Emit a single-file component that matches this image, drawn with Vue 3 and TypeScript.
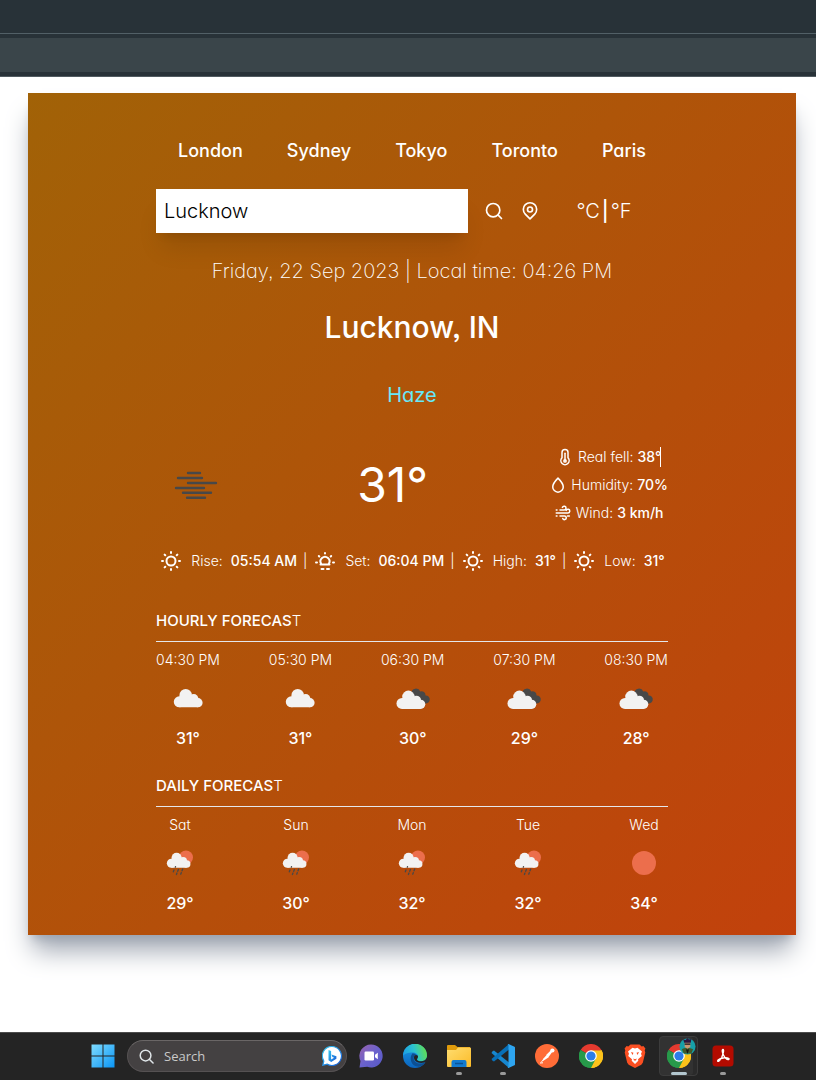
<script setup lang="ts">
import { ref } from 'vue'

type Sky = 'cloud' | 'clouds' | 'rain' | 'clear'
interface Slot { label: string; sky: Sky; temp: string }

const cities = ['London', 'Sydney', 'Tokyo', 'Toronto', 'Paris']
const query = ref('Lucknow')
const taskQuery = ref('')

const sunFacts = [
  { icon: 'sun', label: 'Rise:', value: '05:54 AM' },
  { icon: 'sunset', label: 'Set:', value: '06:04 PM' },
  { icon: 'sun', label: 'High:', value: '31°' },
  { icon: 'sun', label: 'Low:', value: '31°' },
]

const forecasts: { head: string; tail: string; kind: string; slots: Slot[] }[] = [
  {
    head: 'HOURLY FORECAS', tail: 'T', kind: 'hourly',
    slots: [
      { label: '04:30 PM', sky: 'cloud', temp: '31°' },
      { label: '05:30 PM', sky: 'cloud', temp: '31°' },
      { label: '06:30 PM', sky: 'clouds', temp: '30°' },
      { label: '07:30 PM', sky: 'clouds', temp: '29°' },
      { label: '08:30 PM', sky: 'clouds', temp: '28°' },
    ],
  },
  {
    head: 'DAILY FORECAS', tail: 'T', kind: 'daily',
    slots: [
      { label: 'Sat', sky: 'rain', temp: '29°' },
      { label: 'Sun', sky: 'rain', temp: '30°' },
      { label: 'Mon', sky: 'rain', temp: '32°' },
      { label: 'Tue', sky: 'rain', temp: '32°' },
      { label: 'Wed', sky: 'clear', temp: '34°' },
    ],
  },
]
</script>

<template>
  <div class="screen">
    <header class="browser">
      <div class="tabs"></div>
      <div class="toolbar"></div>
    </header>

    <svg class="defs" aria-hidden="true">
      <defs>
        <g id="cloud-shape">
          <circle cx="15.300" cy="27.800" r="5.500" />
          <circle cx="21.700" cy="21.200" r="6.200" />
          <circle cx="29.700" cy="24.800" r="4.700" />
          <circle cx="34" cy="28.700" r="4.600" />
          <path d="M15.300 22.500h14l4.700 4v6.800H15.300z" />
        </g>
        <linearGradient id="win" x1="0" y1="0" x2="1" y2="1"><stop offset="0" stop-color="#7fdcff" /><stop offset="1" stop-color="#0a95f5" /></linearGradient>
        <linearGradient id="chat" x1="0" y1="0" x2="1" y2="1"><stop offset="0" stop-color="#9a62ad" /><stop offset=".5" stop-color="#6a62cc" /><stop offset="1" stop-color="#5558c6" /></linearGradient>
        <linearGradient id="edge-a" x1="0" y1=".6" x2="1" y2=".4"><stop offset="0" stop-color="#1b9de6" /><stop offset=".5" stop-color="#2cc3cf" /><stop offset="1" stop-color="#63e04b" /></linearGradient>
        <linearGradient id="edge-b" x1="0" y1="0" x2="0" y2="1"><stop offset="0" stop-color="#1a9be6" /><stop offset="1" stop-color="#0b64bd" /></linearGradient>
        <linearGradient id="bing" x1="0" y1="0" x2="1" y2="1"><stop offset="0" stop-color="#35c9f0" /><stop offset="1" stop-color="#1558d6" /></linearGradient>
        <linearGradient id="folder" x1="0" y1="0" x2="1" y2="1"><stop offset="0" stop-color="#ffdd70" /><stop offset="1" stop-color="#fbbb28" /></linearGradient>
        <g id="chrome-logo">
          <path d="M12 12 1.600 6A12 12 0 0 1 22.400 6z" fill="#e53a2f" />
          <path d="M12 12 22.400 6A12 12 0 0 1 12 24z" fill="#fcc31b" />
          <path d="M12 12v12A12 12 0 0 1 1.600 6z" fill="#279a4a" />
          <path d="M12 6.500h10.700A12 12 0 0 1 12 24l4.800-9.200z" fill="#fcc31b" />
          <path d="M7.200 14.700 1.600 6A12 12 0 0 0 12 24l4.800-9.200z" fill="#279a4a" />
          <circle cx="12" cy="12" r="5.800" fill="#fff" />
          <circle cx="12" cy="12" r="4.600" fill="#2d7de9" />
        </g>
      </defs>
    </svg>

    <main class="card">
      <nav class="cities" aria-label="Cities">
        <button v-for="city in cities" :key="city" type="button">{{ city }}</button>
      </nav>

      <form class="lookup" @submit.prevent>
        <div class="find">
          <input v-model="query" type="text" aria-label="City" />
          <button type="submit" aria-label="Search city">
            <svg viewBox="0 0 24 24" class="line i20"><circle cx="11" cy="11" r="8" /><path d="m17 17 4 4" /></svg>
          </button>
          <button type="button" aria-label="Use my location">
            <svg viewBox="0 0 24 24" class="line i20"><path d="M12 21.500 6.300 15.700a8 8 0 1 1 11.400 0z" /><circle cx="12" cy="10.200" r="3" /></svg>
          </button>
        </div>
        <div class="units">
          <button type="button">°C</button><span class="bar">|</span><button type="button">°F</button>
        </div>
      </form>

      <p class="when">Friday, 22 Sep 2023 | Local time: 04:26 PM</p>
      <h1>Lucknow, IN</h1>
      <p class="state">Haze</p>

      <section class="now">
        <svg class="haze" viewBox="0 0 80 80" aria-hidden="true">
          <path d="M32 28h12M22 33h24M32 38h28M20 43h28M27 47.700h28M31 52.700h18" />
        </svg>
        <p class="degrees">31°</p>
        <ul class="details">
          <li>
            <svg viewBox="0 0 24 24" class="line i18"><path d="M8 13V6a4 4 0 0 1 8 0v7a5.500 5.500 0 1 1-8 0z" /><path d="M12 7v10" /><circle cx="12" cy="17.200" r="1.500" /></svg>
            <span class="caret">Real fell: <b>38°</b></span>
          </li>
          <li>
            <svg viewBox="0 0 24 24" class="line i18"><path d="M12 2.800C8.500 6.300 5 10.300 5 14.500a7 7 0 0 0 14 0c0-4.200-3.500-8.200-7-11.700z" /></svg>
            <span>Humidity: <b>70%</b></span>
          </li>
          <li>
            <svg viewBox="0 0 24 24" class="line i18"><path d="M3 8h1M8 8h5.500A2.500 2.500 0 1 0 11.200 4.500M3 12h15.500A2.500 2.500 0 1 0 16.200 8.500M3 16h1M8 16h6a2.400 2.400 0 1 1-2.300 3.200M18 16h2.500" /></svg>
            <span>Wind: <b>3 km/h</b></span>
          </li>
        </ul>
      </section>

      <section class="facts">
        <template v-for="(fact, i) in sunFacts" :key="fact.label">
          <span v-if="i" class="split">|</span>
          <div class="fact">
            <svg v-if="fact.icon === 'sun'" viewBox="0 0 24 24" class="line i24">
              <circle cx="12" cy="12" r="4.500" />
              <path d="M12 3v1M12 20v1M3 12h1M20 12h1M5.600 5.600l.7.7M17.700 17.700l.7.7M5.600 18.400l.7-.7M17.700 6.300l.7-.7" />
            </svg>
            <svg v-else viewBox="0 0 24 24" class="line i24">
              <path d="M7.500 15.500h9M8.300 15a4.500 4.500 0 1 1 7.400 0M12 4v.4M3 13.500h1M20 13.500h1M5.800 7l.5.500M17.700 7.500l.5-.5M8.500 20h2M14 20h2" />
            </svg>
            <span>{{ fact.label }}</span>
            <b>{{ fact.value }}</b>
          </div>
        </template>
      </section>

      <section v-for="group in forecasts" :key="group.kind" class="forecast">
        <h2>{{ group.head }}<span>{{ group.tail }}</span></h2>
        <hr />
        <ul :class="['slots', group.kind]">
          <li v-for="slot in group.slots" :key="slot.label">
            <span class="label">{{ slot.label }}</span>
            <svg viewBox="0 0 48 48" aria-hidden="true">
              <use v-if="slot.sky === 'cloud'" href="#cloud-shape" fill="#f2f2f2" />
              <template v-else-if="slot.sky === 'clouds'">
                <path d="M22.300 19a4.700 4.700 0 0 1 9-1.600 4 4 0 0 1 5.200 4.200 3.900 3.900 0 1 1-1.500 7.300L26 25z" fill="#484848" />
                <use href="#cloud-shape" fill="#f2f2f2" transform="translate(-2.300 1.600)" />
              </template>
              <template v-else-if="slot.sky === 'rain'">
                <circle cx="30" cy="18.500" r="7" fill="#ec6e4c" />
                <use href="#cloud-shape" fill="#f2f2f2" transform="translate(2.800 1.400) scale(.82)" />
                <path d="m18 31-.7 1.800M22.400 30.500l-.7 1.800M26.700 30l-.7 1.800M21 34l-.6 1.500M25.300 33.700l-.6 1.500M19.500 27.700l-.2.500" stroke="#484848" stroke-width="1.300" stroke-linecap="round" />
              </template>
              <circle v-else cx="24" cy="24" r="12" fill="#ec6e4c" />
            </svg>
            <b>{{ slot.temp }}</b>
          </li>
        </ul>
      </section>
    </main>

    <footer class="taskbar">
      <button type="button" class="task" aria-label="Start">
        <svg viewBox="0 0 24 24"><path d="M.5.500h11v11H.5zM12.500.500h11v11h-11zM.5 12.500h11v11H.5zM12.500 12.500h11v11h-11z" fill="url(#win)" /></svg>
      </button>
      <label class="tasksearch">
        <svg viewBox="0 0 16 16" class="glass"><circle cx="7" cy="7" r="5.700" /><path d="m11 11 4 4" /></svg>
        <input v-model="taskQuery" type="text" placeholder="Search" aria-label="Search this computer" />
        <svg viewBox="0 0 20 20" class="bing">
          <path d="M10 .5a9.500 9.500 0 1 1-5 17.600L.8 19.300 1.800 15A9.500 9.500 0 0 1 10 .5z" fill="#fff" stroke="url(#bing)" stroke-width="1.200" />
          <path d="m6.500 4 2.600 1v8.500l3-1.700-1.700-.8-1-2.500 5 1.700v2.600l-5.200 3.100-2.700-1.600z" fill="url(#bing)" />
        </svg>
      </label>
      <button type="button" class="task" aria-label="Chat">
        <svg viewBox="0 0 24 24"><path d="M12 .5a11.500 11.500 0 1 1-3.800 22.300L.5 23.500l1-6.500A11.500 11.500 0 0 1 12 .5z" fill="url(#chat)" /><rect x="5.500" y="7.500" width="9.500" height="9" rx="1.200" fill="#fff" /><path d="m16 10.800 2.800-2.100v6.600L16 13.200z" fill="#fff" /></svg>
      </button>
      <button type="button" class="task" aria-label="Edge">
        <svg viewBox="0 0 24 24">
          <circle cx="12" cy="12" r="12" fill="url(#edge-b)" />
          <path d="M0 12A12 12 0 0 1 24 11.500c0 3.600-2.600 5.700-5.700 5.700-2.600 0-4.300-.9-4.300-1.800 0-.7 1-1 1-3 0-2.200-2.200-4-5.300-4C5.500 8.400.5 10 0 12z" fill="url(#edge-a)" />
          <path d="M9.500 9.200C5.500 14 8.500 22 14.500 22.600c3 .3 6-1.300 7.800-4.400C15 22 9 17 11 12.500c.6-1.200 1.400-1.500 2.500-1.200-.8-1.300-2.500-2.100-4-2.100z" fill="#0d4f92" />
          <path d="M24 17.200c-6 3.800-13.500.8-13-4.200.2-1.200 1-2 2-2 1.300 0 2 .8 2 1.800s-1 1.600-1 2.600c0 1 1.700 1.800 4.300 1.800 2 0 4.500-.8 5.700-4z" fill="#242424" />
        </svg>
      </button>
      <button type="button" class="task running" aria-label="Files">
        <svg viewBox="0 0 24 24"><path d="M0 2a1 1 0 0 1 1-1h7l2.500 2H23v5H0z" fill="#e09b0b" /><path d="M0 6h9l2-2.500h12a1 1 0 0 1 1 1V22a1 1 0 0 1-1 1H1a1 1 0 0 1-1-1z" fill="url(#folder)" /><path d="M4.500 23v-5a2 2 0 0 1 2-2h11a2 2 0 0 1 2 2v5z" fill="#127bd0" /><path d="M8 19.500h8" stroke="#0a5396" stroke-width="1.500" /></svg>
      </button>
      <button type="button" class="task running" aria-label="Code">
        <svg viewBox="0 0 24 24"><path d="M1.500 7.200 3 6.500l15 12V24L.5 9z" fill="#1787cf" /><path d="M1.500 16.800 3 17.500l15-12V0L.5 15z" fill="#0870b8" /><path d="m17.500 0 6 2.800a1 1 0 0 1 .5 1v16.400a1 1 0 0 1-.5 1l-6 2.800-1.200-.6c.7.300 1.200-.2 1.200-.8V1.400c0-.6-.5-1.100-1.200-.8z" fill="#2ea5f0" /></svg>
      </button>
      <button type="button" class="task" aria-label="Postman">
        <svg viewBox="0 0 24 24"><circle cx="12" cy="12" r="12" fill="#ff6c37" /><path d="M5.300 18.800 11.500 11l2.300 2.200zM11.300 10.800l4.400-4.200 1.500 1.500-3.600 4.900z" fill="#fff" /><circle cx="17.400" cy="6.500" r="2.100" fill="#fff" /><path d="m5 19 3-.2M8 15.500l3-2.600" stroke="#fff" /></svg>
      </button>
      <button type="button" class="task" aria-label="Chrome">
        <svg viewBox="0 0 24 24"><use href="#chrome-logo" /></svg>
      </button>
      <button type="button" class="task" aria-label="Brave">
        <svg viewBox="0 0 24 24"><path d="M7.500.5h9l2.200 2 1.700-.4 2 2.500-.7 2 .6 2-2.500 10.200-1.500 2L12 24l-6.300-3.200-1.500-2L1.700 8.600l.6-2-.7-2 2-2.500 1.700.4z" fill="#fb4f22" /><path d="m12 4.500 2.500-.7L19 7.500l-1 2.200.8 2.300-3.800 3.300.3 1.500L12 20l-3.300-3.200.3-1.500L5.200 12 6 9.700 5 7.500l4.500-3.700z" fill="#fff" /><path d="m8 8 2.500.8-1 2.300zM16 8l-2.500.8 1 2.300zM10.300 14.500l1.700.8 1.700-.8-.7 2h-2z" fill="#fb4f22" /></svg>
      </button>
      <button type="button" class="task active" aria-label="Chrome profile window">
        <svg viewBox="0 0 24 24"><use href="#chrome-logo" /></svg>
        <svg class="avatar" viewBox="0 0 18 18"><circle cx="9" cy="9" r="8.500" fill="#16a0a8" /><path d="M3 12c2-2 9-2 12 0l-2 4.500H5z" fill="#3f5a2c" /><path d="M6 4h6v5.500l-3 2-3-2z" fill="#c99772" /><path d="M4.500 1.500 7 2l2-2 1.500 1.500L13 1l-.5 4h-7z" fill="#2a1740" /><path d="M6 6.500h6M8 12l1 3 1-3" stroke="#15151c" stroke-width="1.300" fill="none" /></svg>
      </button>
      <button type="button" class="task running" aria-label="Acrobat">
        <svg viewBox="0 0 24 24"><rect x="1.500" y="1.500" width="21" height="21" rx="3.500" fill="#b30b00" /><path d="M12 5.500c-1.400 0-.6 3.500.6 5.800 1.400 2.600 3.700 4.600 5 4.200 1.400-.6-.4-2-4-1.700-3.400.3-7 1.700-7 3 0 1.500 2.400 0 4.200-3.500C12.200 10 13.200 5.500 12 5.500z" fill="none" stroke="#fff" stroke-width="1.400" /></svg>
      </button>
    </footer>
  </div>
</template>

<style>
body {
  background: #fff;
}
</style>

<style scoped>
* {
  box-sizing: border-box;
}

.screen {
  display: flex;
  flex-direction: column;
  min-height: 100vh;
  overflow: hidden;
  font-family: Inter, "Liberation Sans", sans-serif;
  font-feature-settings: "cv11", "ss03";
  font-weight: 300;
  color: #fff;
}

.defs {
  position: absolute;
  width: 0;
  height: 0;
}

.browser {
  border-bottom: 1px solid #515b61;
  background: #283238;
}

.tabs {
  height: 34px;
  border-bottom: 1px solid #526067;
}

.toolbar {
  height: 34px;
  margin: 4px 0;
  background: #3a454a;
}

button,
input {
  margin: 0;
  padding: 0;
  border: 0;
  background: none;
  color: inherit;
  font: inherit;
  font-feature-settings: inherit;
}

button {
  cursor: pointer;
}

p,
h1,
h2,
ul {
  margin: 0;
  padding: 0;
  list-style: none;
}

b {
  font-weight: 500;
}

svg {
  display: block;
  flex: none;
}

.line {
  fill: none;
  stroke: #fff;
  stroke-width: 2;
  stroke-linecap: round;
  stroke-linejoin: round;
}

.i18 {
  width: 18px;
  height: 18px;
}

.i20 {
  width: 20px;
  height: 20px;
}

.i24 {
  width: 24px;
  height: 24px;
}

.card {
  margin: 16px 20px 48px 28px;
  padding: 20px 128px;
  background: linear-gradient(to bottom right, #a16207, #c2410c);
  box-shadow: 0 20px 25px -5px #9ca3af, 0 8px 10px -6px #9ca3af;
}

.cities {
  display: flex;
  justify-content: space-around;
  margin: 24px 0;
  font-size: 18px;
  font-weight: 500;
  line-height: 28px;
}

.lookup {
  display: flex;
  margin: 24px 0;
  font-size: 20px;
  line-height: 28px;
}

.find {
  display: flex;
  flex: 3;
  align-items: center;
  gap: 16px;
  min-width: 0;
}

.find input {
  flex: 1;
  min-width: 0;
  height: 44px;
  padding: 8px;
  outline: none;
  background: #fff;
  color: #000;
  box-shadow: 0 20px 25px -5px rgba(0, 0, 0, 0.1), 0 8px 10px -6px rgba(0, 0, 0, 0.1);
}

.units {
  display: flex;
  flex: 1;
  align-items: center;
  justify-content: center;
}

.bar {
  margin: 0 2px;
  font-weight: 500;
}

.when {
  margin: 24px 0;
  font-size: 20px;
  font-weight: 200;
  line-height: 28px;
  text-align: center;
}

h1 {
  margin: 24px 0 12px;
  font-size: 30px;
  font-weight: 500;
  line-height: 36px;
  text-align: center;
}

.state {
  padding: 24px 0;
  color: #67e8f9;
  font-size: 20px;
  font-weight: 400;
  line-height: 28px;
  text-align: center;
}

.now {
  display: flex;
  align-items: center;
  justify-content: space-between;
  padding: 12px 0;
}

.haze {
  width: 80px;
  height: 80px;
  fill: none;
  stroke: #484848;
  stroke-width: 2.400;
  stroke-linecap: round;
}

.degrees {
  font-size: 48px;
  font-weight: 400;
  line-height: 48px;
}

.details {
  display: flex;
  flex-direction: column;
  align-items: center;
  gap: 8px;
  font-size: 14px;
  line-height: 20px;
}

.details li {
  display: flex;
  align-items: center;
  gap: 4px;
}

.caret {
  position: relative;
}

.caret::after {
  content: "";
  position: absolute;
  top: 0;
  right: 0;
  width: 1px;
  height: 20px;
  background: #fff;
}

.facts {
  display: flex;
  align-items: center;
  justify-content: center;
  gap: 6px;
  padding: 12px 0;
  font-size: 14px;
  line-height: 20px;
}

.fact {
  display: flex;
  align-items: center;
  gap: 8px;
  white-space: nowrap;
}

.forecast {
  margin-top: 24px;
}

h2 {
  font-size: 15px;
  font-weight: 500;
  line-height: 24px;
}

h2 span {
  font-weight: 300;
}

hr {
  height: 0;
  margin: 8px 0;
  border: 0;
  border-top: 1px solid #e5e7eb;
}

.slots {
  display: flex;
  justify-content: space-between;
}

.slots li {
  display: flex;
  flex-direction: column;
  align-items: center;
}

.slots svg {
  width: 48px;
  height: 48px;
  margin: 4px 0;
}

.slots .label {
  font-size: 14px;
  line-height: 20px;
}

.slots b {
  font-size: 16px;
  line-height: 24px;
}

.taskbar {
  display: flex;
  justify-content: center;
  height: 48px;
  margin-top: auto;
  padding-left: 10px;
  border-top: 1px solid #4c4c4c;
  background: #242424;
}

.task {
  position: relative;
  display: grid;
  flex: none;
  place-items: center;
  width: 44px;
  height: 46px;
}

.task svg {
  width: 24px;
  height: 24px;
}

.tasksearch {
  display: flex;
  align-items: center;
  width: 220px;
  height: 32px;
  margin: 7px 2px 0;
  padding: 0 4px 0 11px;
  border: 1px solid #555152;
  border-top-color: #6a6666;
  border-radius: 16px;
  background: #444142;
}

.tasksearch input {
  flex: 1;
  min-width: 0;
  padding-left: 10px;
  outline: none;
  font: 400 13px/20px "Open Sans", "Noto Sans", sans-serif;
}

.tasksearch input::placeholder {
  color: #c9c9c9;
  opacity: 1;
}

.glass {
  width: 15px;
  height: 15px;
  fill: none;
  stroke: #dfe5e8;
  stroke-width: 1.600;
  stroke-linecap: round;
}

.bing {
  width: 20px;
  height: 20px;
}

.running::after,
.active::after {
  content: "";
  position: absolute;
  bottom: 4px;
  left: 19px;
  width: 6px;
  height: 3px;
  border-radius: 2px;
  background: #9a9a9a;
}

.active::before {
  content: "";
  position: absolute;
  inset: 3px 3px 3px 2px;
  border: 1px solid #3c3c3c;
  border-radius: 4px;
  background: #323232;
  box-shadow: inset -4px 0 0 #2a2a2a;
}

.active svg {
  position: relative;
}

.active::after {
  left: 14px;
  width: 16px;
  background: #b3c7cf;
}

.task .avatar {
  position: absolute;
  top: 5px;
  right: 5px;
  width: 17px;
  height: 17px;
}
</style>
